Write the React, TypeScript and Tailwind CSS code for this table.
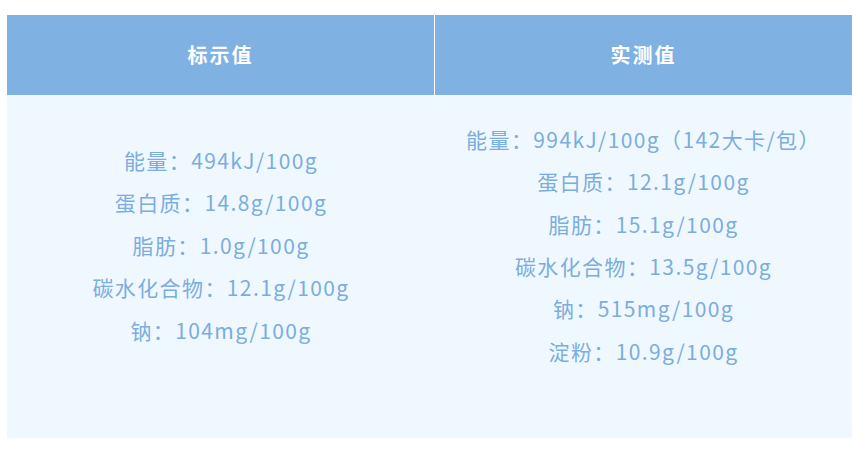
import React from "react";

const left = ["能量：494kJ/100g", "蛋白质：14.8g/100g", "脂肪：1.0g/100g", "碳水化合物：12.1g/100g", "钠：104mg/100g"];
const right = ["能量：994kJ/100g（142大卡/包）", "蛋白质：12.1g/100g", "脂肪：15.1g/100g", "碳水化合物：13.5g/100g", "钠：515mg/100g", "淀粉：10.9g/100g"];

const font = { fontFamily: '"Noto Sans CJK SC", "Noto Sans", sans-serif' };

export default function App() {
  return (
    <div className="w-[861px] h-[455px] bg-white pt-[15px] pl-[7px]" style={font}>
      <div className="w-[845px] flex flex-col">
        <div className="flex h-[80px] bg-[#7fb1e2]">
          <div className="w-[427px] flex items-center justify-center text-white font-bold text-[20px] tracking-[2px]">标示值</div>
          <div className="w-[1px] bg-white" />
          <div className="flex-1 flex items-center justify-center text-white font-bold text-[20px] tracking-[2px]">实测值</div>
        </div>
        <div className="flex h-[343px] bg-[#f0f8ff] text-[#7badde] text-[21px] tracking-[1.4px] leading-[42.4px]">
          <div className="w-[428px] flex flex-col items-center justify-center pb-[43px]">
            {left.map((t) => (
              <div key={t}>{t}</div>
            ))}
          </div>
          <div className="flex-1 flex flex-col items-center justify-center pb-[43px]">
            {right.map((t) => (
              <div key={t}>{t}</div>
            ))}
          </div>
        </div>
      </div>
    </div>
  );
}
